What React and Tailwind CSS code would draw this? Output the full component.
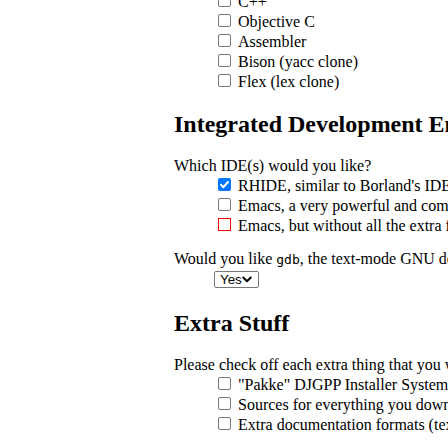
const serif = { fontFamily: '"Liberation Serif", "Times New Roman", serif' };

function Box({ state }) {
  if (state === 'checked') {
    return (
      <span className="shrink-0 self-start mt-[2px] ml-[4px] mr-[3px] w-[13px] h-[13px] rounded-[2px] bg-[#0075ff] flex items-center justify-center">
        <svg width="11" height="11" viewBox="0 0 11 11">
          <path d="M2 5.8 L4.4 8.2 L9 3" fill="none" stroke="#fff" strokeWidth="2" strokeLinecap="round" strokeLinejoin="round" />
        </svg>
      </span>
    );
  }
  if (state === 'invalid') {
    return <span className="shrink-0 self-start mt-[2px] ml-[4px] mr-[3px] w-[13px] h-[13px] border border-[#ff0000] bg-white" />;
  }
  return <span className="shrink-0 self-start mt-[2px] ml-[4px] mr-[3px] w-[13px] h-[13px] rounded-[2px] border border-[#767676] bg-white" />;
}

function Option({ label, state }) {
  return (
    <div className="flex h-[20px] leading-[20px] pl-[40px]">
      <Box state={state} />
      <span className="pl-[4px]">{label}</span>
    </div>
  );
}

function Heading({ children, className = '' }) {
  return <h2 className={`text-[24px] leading-[28px] font-bold ${className}`}>{children}</h2>;
}

export default function App() {
  const languages = ['C++', 'Objective C', 'Assembler', 'Bison (yacc clone)', 'Flex (lex clone)'];

  return (
    <div className="w-[448px] h-[448px] overflow-hidden bg-white text-black text-[16px] whitespace-nowrap" style={serif}>
      <div className="pl-[174px] -mt-[8px]">
        {languages.map((l) => (
          <Option key={l} label={l} />
        ))}

        <Heading className="mt-[18px]">Integrated Development Environments</Heading>

        <div className="mt-[18px] h-[20px] leading-[20px]">Which IDE(s) would you like?</div>
        <Option label="RHIDE, similar to Borland's IDE, including a built-in debugger" state="checked" />
        <Option label="Emacs, a very powerful and complex editor" />
        <Option label="Emacs, but without all the extra features" state="invalid" />

        <div className="mt-[13px] h-[20px] leading-[20px]">
          Would you like{' '}
          <code className="text-[13px]" style={{ fontFamily: '"DejaVu Sans Mono", "Liberation Mono", monospace' }}>gdb</code>
          , the text-mode GNU debugger?
        </div>
        <div className="pl-[40px] h-[20px]">
          <div
            className="mt-[2px] w-[45px] h-[17px] border border-[#767676] rounded-[2px] flex items-center pl-[5px] pr-[6px] justify-between text-[13.33px]"
            style={{ fontFamily: '"Liberation Sans", Arial, sans-serif' }}
          >
            <span className="leading-none">Yes</span>
            <svg width="10" height="7" viewBox="0 0 10 7">
              <path d="M1.3 1.5 L5 5.2 L8.7 1.5" fill="none" stroke="#000" strokeWidth="2" strokeLinecap="round" strokeLinejoin="round" />
            </svg>
          </div>
        </div>

        <Heading className="mt-[18px]">Extra Stuff</Heading>

        <div className="mt-[18px] h-[20px] leading-[20px]">Please check off each extra thing that you want.</div>
        <Option label={'"Pakke" DJGPP Installer System (experimental)'} />
        <Option label="Sources for everything you download" />
        <Option label="Extra documentation formats (texinfo, HTML)" />
      </div>
    </div>
  );
}
